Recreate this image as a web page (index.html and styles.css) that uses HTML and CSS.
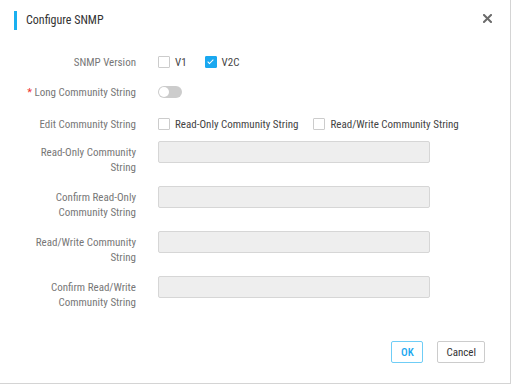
FILE: index.html
```html
<!DOCTYPE html>
<html lang="en">
<head>
    <meta charset="UTF-8">
    <title>Configure SNMP</title>
    <link rel="stylesheet" href="styles.css">
</head>
<body>
    <div class="dialog">
        <div class="dialog-header">
            <div class="title"><span class="accent"></span>Configure SNMP</div>
            <svg class="close" width="9" height="9" viewBox="0 0 9 9">
                <path d="M1 1L8 8M8 1L1 8" stroke="#6b6b6b" stroke-width="2" stroke-linecap="square"/>
            </svg>
        </div>

        <div class="form">
            <div class="row row-ver">
                <div class="label">SNMP Version</div>
                <div class="controls">
                    <label class="check"><span class="box"></span>V1</label>
                    <label class="check"><span class="box checked"></span>V2C</label>
                </div>
            </div>
            <div class="row row-long">
                <div class="label"><span class="req">*</span> Long Community String</div>
                <div class="controls">
                    <span class="toggle"><span class="knob"></span></span>
                </div>
            </div>
            <div class="row row-edit">
                <div class="label">Edit Community String</div>
                <div class="controls">
                    <label class="check wide"><span class="box"></span>Read-Only Community String</label>
                    <label class="check"><span class="box"></span>Read/Write Community String</label>
                </div>
            </div>
            <div class="row field">
                <div class="label">Read-Only Community String</div>
                <input type="password" disabled>
            </div>
            <div class="row field">
                <div class="label">Confirm Read-Only Community String</div>
                <input type="password" disabled>
            </div>
            <div class="row field">
                <div class="label">Read/Write Community String</div>
                <input type="password" disabled>
            </div>
            <div class="row field">
                <div class="label">Confirm Read/Write Community String</div>
                <input type="password" disabled>
            </div>
        </div>

        <div class="footer">
            <button class="btn ok">OK</button>
            <button class="btn">Cancel</button>
        </div>
    </div>
</body>
</html>
```

FILE: styles.css
```css
body {
    margin: 0;
    font-family: "Roboto Condensed", Roboto, sans-serif;
    background: #fff;
}
.dialog {
    width: 510px;
    height: 383px;
    border-right: 1px solid #d4d4d4;
    border-bottom: 1px solid #d4d4d4;
    display: flex;
    flex-direction: column;
}
.dialog-header {
    display: flex;
    justify-content: space-between;
    align-items: center;
    height: 40px;
    padding: 0 18px 0 14px;
}
.title { display: flex; align-items: center; font-size: 12px; color: #333; }
.accent { width: 3px; height: 19px; background: #1ab0f0; margin-right: 9px; }
.close { display: block; margin-top: -4px; }

.form { padding: 10px 0 0 14px; }
.row { display: flex; align-items: center; }
.label {
    width: 122px;
    margin-right: 22px;
    text-align: right;
    font-size: 11px;
    line-height: 15px;
    color: #777;
}
.req { color: #e33; }
.row-ver { height: 24px; }
.row-long { height: 24px; margin-top: 6px; }
.row-edit { height: 24px; margin-top: 8px; }

.controls { display: flex; align-items: center; white-space: nowrap; }
.check { display: flex; align-items: center; font-size: 11px; color: #444; margin-right: 18px; }
.check.wide { margin-right: 15px; }
.box {
    width: 10px;
    height: 10px;
    border: 1px solid #ccc;
    border-radius: 1px;
    margin-right: 5px;
    position: relative;
}
.box.checked { background: #1aa8f0; border-color: #1aa8f0; }
.box.checked::after {
    content: "";
    position: absolute;
    left: 3px;
    top: 1px;
    width: 2px;
    height: 5px;
    border: solid #fff;
    border-width: 0 1.5px 1.5px 0;
    transform: rotate(45deg);
}
.toggle {
    width: 24px;
    height: 12px;
    border-radius: 6px;
    background: #ccc;
    position: relative;
}
.knob {
    position: absolute;
    left: 1px;
    top: 1px;
    width: 10px;
    height: 10px;
    border-radius: 50%;
    background: #fff;
}

.field { align-items: flex-start; height: 45px; }
.row-edit + .field { margin-top: 5px; }
.field .label { padding-top: 4px; }
.field input {
    width: 272px;
    height: 22px;
    box-sizing: border-box;
    border: 1px solid #d6d6d6;
    border-radius: 2px;
    background: #eee;
    margin: 0;
}

.footer {
    margin-top: auto;
    display: flex;
    justify-content: flex-end;
    gap: 14px;
    padding: 0 25px 20px 0;
}
.btn {
    height: 22px;
    padding: 0 8px;
    background: #fff;
    border: 1px solid #ccc;
    border-radius: 2px;
    font-family: inherit;
    font-size: 11px;
    color: #333;
}
.btn.ok { border-color: #6fcdf6; color: #1aa8f0; font-weight: 500; min-width: 32px; }
```
